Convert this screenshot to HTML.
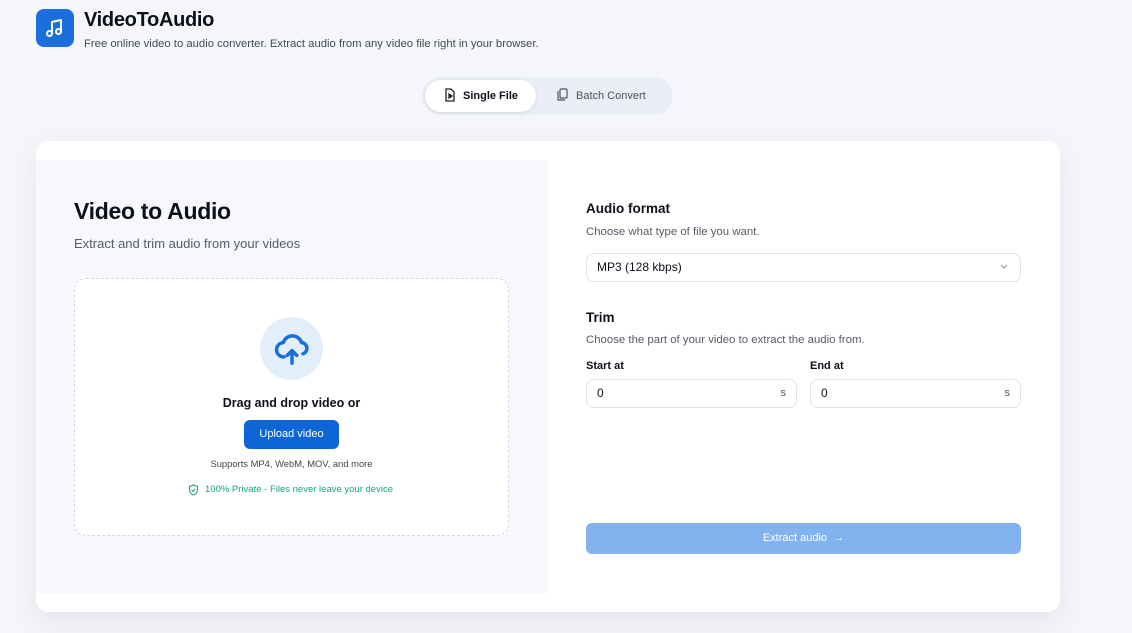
<!DOCTYPE html>
<html><head><meta charset="utf-8"><style>
*{box-sizing:border-box;margin:0;padding:0}
body{width:1132px;height:633px;background:#f5f6fa;font-family:"Liberation Sans",sans-serif;position:relative;overflow:hidden;color:#0d0f1a}
.a{position:absolute}
.logo{left:36px;top:9px;width:38px;height:38px;border-radius:8px;background:#1a6fdc}
.card{left:36px;top:141px;width:1024px;height:471px;background:#fff;border-radius:12px;box-shadow:0 10px 30px rgba(30,40,80,.08)}
.lp{left:36px;top:160px;width:512px;height:433px;background:#f7f8fd}
.dz{left:74px;top:278px;width:435px;height:258px;background:#fff;border:1px dashed #d4d7e6;border-radius:12px}
.field{border:1px solid #dfe2ea;border-radius:8px;background:#fff;height:29px;font-size:12px;padding:0 10px;line-height:27px}
.lbl{font-size:11px;font-weight:bold}
.sub{font-size:11.4px;color:#555b68}
</style></head><body>
<div class="a logo"><svg width="38" height="38" viewBox="0 0 38 38" fill="none" stroke="#fff" stroke-width="2" stroke-linecap="round" stroke-linejoin="round"><path d="M16 24V13l9-2v11"/><circle cx="13.5" cy="24.5" r="2.5"/><circle cx="22.5" cy="22.5" r="2.5"/></svg></div>
<div class="a" style="left:84px;top:9px;font-size:20px;font-weight:bold;letter-spacing:-.3px">VideoToAudio</div>
<div class="a" style="left:84px;top:38px;font-size:11.3px;color:#444a58">Free online video to audio converter. Extract audio from any video file right in your browser.</div>
<div class="a" style="left:422px;top:77px;width:251px;height:38px;border-radius:19px;background:#eceef7"></div>
<div class="a" style="left:425px;top:80px;width:111px;height:32px;border-radius:16px;background:#fff;box-shadow:0 1px 4px rgba(0,0,0,.1)"></div>
<svg class="a" style="left:444px;top:88px" width="12" height="14" viewBox="0 0 12 14" fill="none" stroke="#222" stroke-width="1.3"><path d="M2 1h5l3 3v9H2z"/><path d="M5 6l3 2-3 2z" fill="#222"/></svg>
<div class="a" style="left:463px;top:90px;font-size:11px;font-weight:bold">Single File</div>
<svg class="a" style="left:556px;top:88px" width="12" height="13" viewBox="0 0 12 13" fill="none" stroke="#555" stroke-width="1.2"><rect x="4" y="1" width="7" height="9" rx="1"/><path d="M2 3v9h7"/></svg>
<div class="a" style="left:576px;top:90px;font-size:11px;color:#4a5060">Batch Convert</div>
<div class="a card"></div>
<div class="a lp"></div>
<div class="a" style="left:74px;top:198px;font-size:23px;font-weight:bold;letter-spacing:-.3px">Video to Audio</div>
<div class="a" style="left:74px;top:236px;font-size:13px;color:#555b68">Extract and trim audio from your videos</div>
<div class="a dz"></div>
<div class="a" style="left:260px;top:317px;width:63px;height:63px;border-radius:50%;background:#e3eefb"></div>
<svg class="a" style="left:273px;top:330px" width="38" height="38" viewBox="0 0 24 24" fill="none" stroke="#1a6fdc" stroke-width="2.2" stroke-linecap="round" stroke-linejoin="round"><path d="M7 17a4.5 4.5 0 0 1-.5-9A6 6 0 0 1 18 8a3.6 3.6 0 0 1 1 7"/><path d="M12 21v-8M9 16l3-3 3 3"/></svg>
<div class="a" style="left:74px;top:396px;width:435px;text-align:center;font-size:12.5px;font-weight:bold">Drag and drop video or</div>
<div class="a" style="left:244px;top:420px;width:95px;height:29px;border-radius:6px;background:#0d66d8;color:#fff;font-size:11px;text-align:center;line-height:29px">Upload video</div>
<div class="a" style="left:74px;top:458px;width:435px;text-align:center;font-size:9.4px;color:#444">Supports MP4, WebM, MOV, and more</div>
<svg class="a" style="left:188px;top:484px" width="11" height="12" viewBox="0 0 11 12" fill="none" stroke="#1aa37a" stroke-width="1.1"><path d="M5.5 1L1.5 2.5v3c0 3 2 5 4 5.5 2-.5 4-2.5 4-5.5v-3z"/><path d="M3.7 6l1.3 1.3 2.3-2.3"/></svg>
<div class="a" style="left:205px;top:484px;font-size:9.5px;color:#1aa37a">100% Private - Files never leave your device</div>
<div class="a" style="left:586px;top:201px;font-size:13.5px;font-weight:bold">Audio format</div>
<div class="a sub" style="left:586px;top:226px">Choose what type of file you want.</div>
<div class="a field" style="left:586px;top:253px;width:435px">MP3 (128 kbps)</div>
<svg class="a" style="left:999px;top:263px" width="10" height="8" viewBox="0 0 10 8" fill="none" stroke="#999" stroke-width="1.1"><path d="M2 2l3 3 3-3"/></svg>
<div class="a" style="left:586px;top:310px;font-size:13.5px;font-weight:bold">Trim</div>
<div class="a sub" style="left:586px;top:334px">Choose the part of your video to extract the audio from.</div>
<div class="a lbl" style="left:586px;top:360px">Start at</div>
<div class="a lbl" style="left:810px;top:360px">End at</div>
<div class="a field" style="left:586px;top:379px;width:211px">0<span style="float:right;color:#555;font-size:11px">s</span></div>
<div class="a field" style="left:810px;top:379px;width:211px">0<span style="float:right;color:#555;font-size:11px">s</span></div>
<div class="a" style="left:586px;top:523px;width:435px;height:31px;border-radius:6px;background:#82b3ee;color:#fff;font-size:11px;text-align:center;line-height:31px">Extract audio &nbsp;→</div>
</body></html>
